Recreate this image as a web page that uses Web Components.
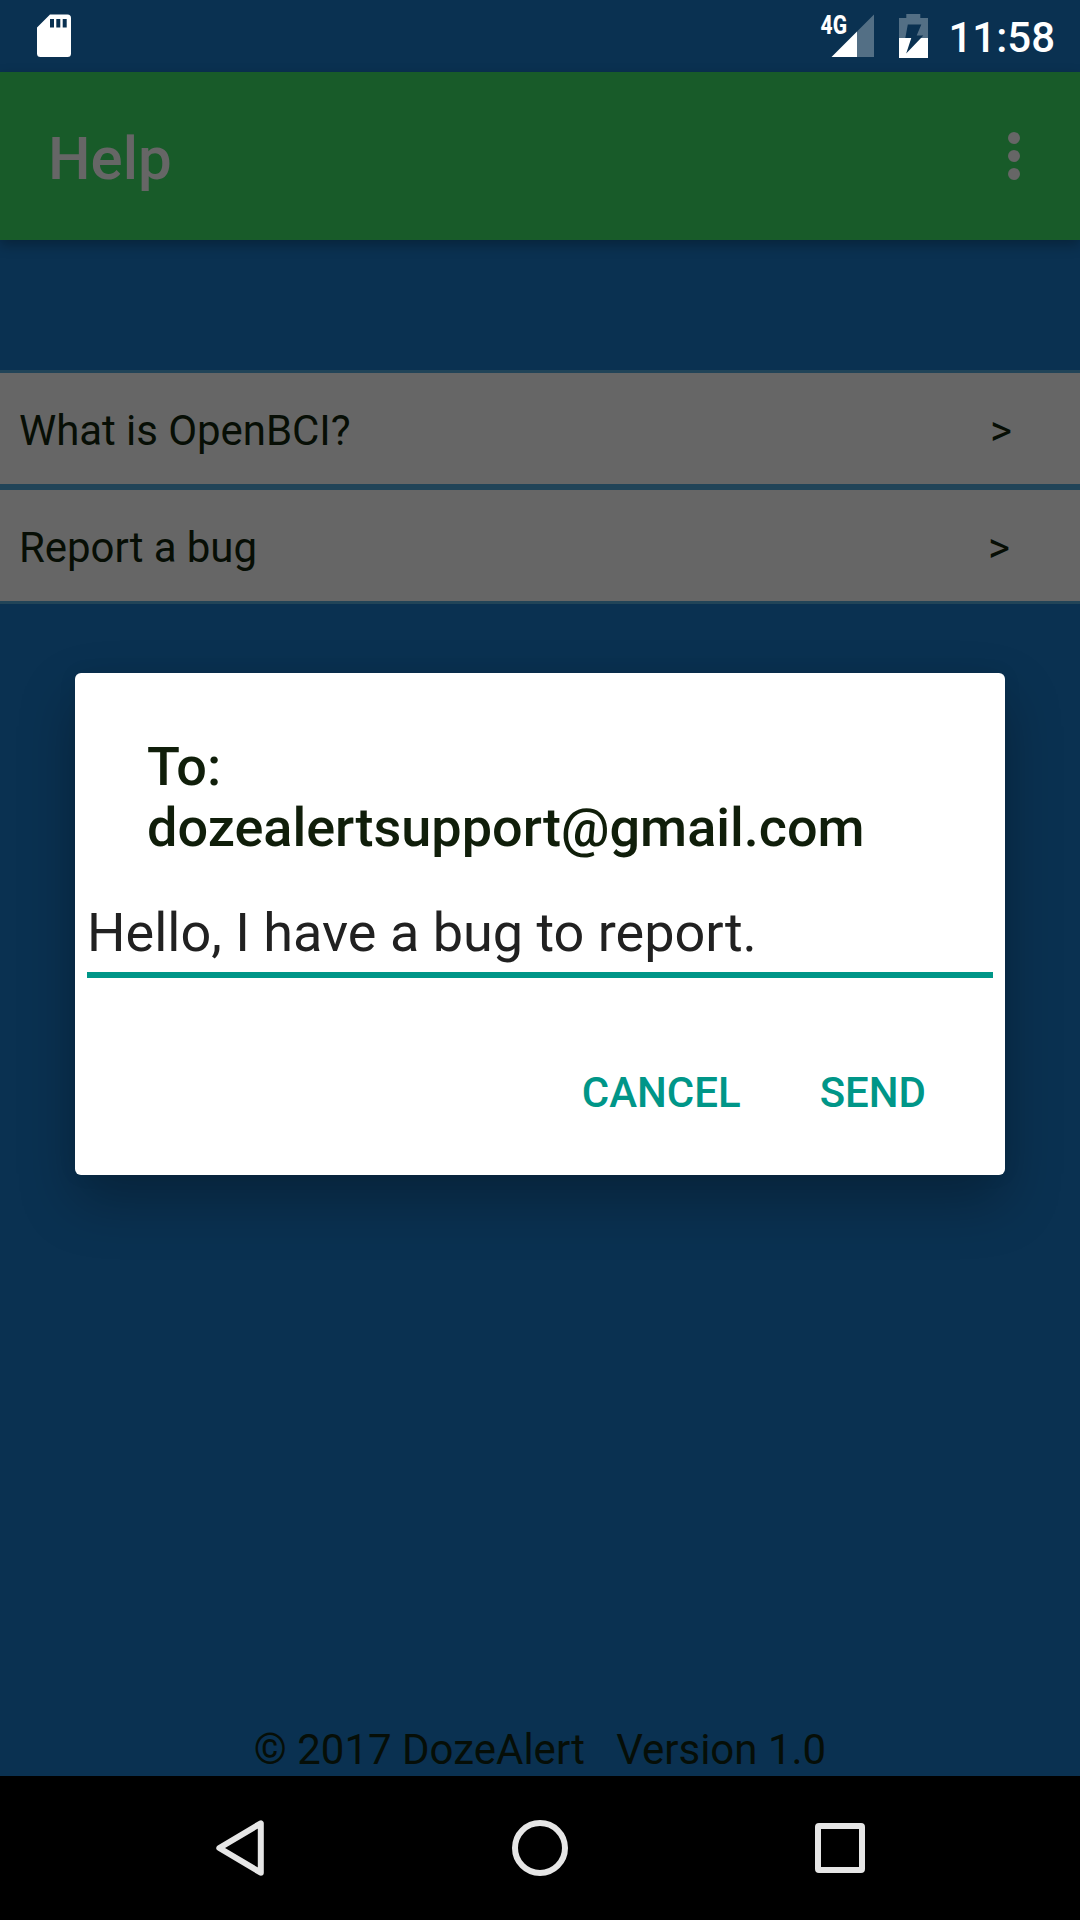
<!DOCTYPE html>
<html lang="en">
<head>
<meta charset="utf-8">
<title>Help</title>
<style>
html,body{margin:0;padding:0}
body{width:1080px;height:1920px;overflow:hidden;font-family:Roboto,sans-serif;background:#0a3151}
</style>
</head>
<body>
<help-screen></help-screen>
<script>
function define(name, html) {
  const t = document.createElement('template');
  t.innerHTML = html;
  customElements.define(name, class extends HTMLElement {
    constructor() {
      super();
      this.attachShadow({ mode: 'open' }).appendChild(t.content.cloneNode(true));
    }
  });
}

define('status-bar', `
<style>
:host{display:flex;height:72px;box-sizing:border-box;padding:0 25px 0 36px;justify-content:space-between;color:#fff}
svg{display:block}
.right{display:flex}
.battery{margin-left:22px}
.time{font-size:42px;font-weight:500;line-height:72px;margin-left:18px;padding-top:2px}
</style>
<svg width="36" height="72" viewBox="36 0 36 72">
  <path fill="#fff" fill-rule="evenodd" d="M50 14.5H67.5Q71 14.5 71 18V53.500Q71 57 67.500 57H40.500Q37 57 37 53.500V27.500ZM50 19V27.500H54V19ZM56.300 19V27.500H60.300V19ZM62.700 19V27.500H66.700V19Z"/>
</svg>
<div class="right">
  <svg width="56" height="72" viewBox="820 0 56 72">
    <path fill="#fff" fill-opacity=".3" d="M874 14.500V57H857V31.500Z"/>
    <path fill="#fff" d="M857 31.500V57H831.500Z"/>
    <text x="820.500" y="33.500" font-size="26" font-weight="800" fill="#fff" textLength="26.500" lengthAdjust="spacingAndGlyphs">4G</text>
  </svg>
  <svg class="battery" width="32" height="72" viewBox="898 0 32 72">
    <path fill="#fff" fill-opacity=".3" d="M906.300 14H920.300V18H928V38H921L923.300 35.500H916.700L921.300 24.500H907.800L905.300 38H899V18H906.300Z"/>
    <path fill="#fff" d="M899 38H911.300L906.200 53.500L921 38H928V58H899Z"/>
  </svg>
  <div class="time">11:58</div>
</div>`);

define('app-bar', `
<style>
:host{display:flex;height:168px;box-sizing:border-box;background:#185b29;color:#666;padding:0 60px 0 48px;justify-content:space-between;align-items:center;box-shadow:0 5px 12px rgba(0,0,0,.28)}
.title{font-size:60px;font-weight:500;line-height:70px;padding-top:6px}
.dots{display:flex;flex-direction:column;gap:6px}
i{width:12px;height:12px;border-radius:50%;background:#666}
</style>
<div class="title"><slot></slot></div>
<div class="dots"><i></i><i></i><i></i></div>`);

define('list-row', `
<style>
:host{display:flex;height:117px;box-sizing:border-box;border:solid #214458;border-width:3px 0;background:#666;color:#070e05;font-size:42px;line-height:49px;padding:0 68px 0 19px;justify-content:space-between;align-items:center}
div{padding-top:4px}
.label{letter-spacing:-.06px}
</style>
<div class="label"><slot></slot></div><div><slot name="end"></slot></div>`);

define('email-dialog', `
<style>
:host{display:flex;flex-direction:column;box-sizing:border-box;width:930px;height:502px;background:#fff;border-radius:6px;box-shadow:0 26px 56px rgba(0,0,0,.27),0 0 20px rgba(0,0,0,.06)}
h1{margin:0;padding:63px 72px 0;font-size:54px;font-weight:500;line-height:61px;color:#101e0a}
.field{margin:37px 12px 0;height:77px;box-sizing:content-box;border-bottom:6px solid #009688;color:#212121;font-size:54px;line-height:75px;white-space:nowrap}
.actions{display:flex;justify-content:flex-end;gap:79px;padding:90px 79px 0 0;font-size:42px;font-weight:500;line-height:50px;color:#009688}
</style>
<h1><slot name="to"></slot></h1>
<div class="field"><slot name="message"></slot></div>
<div class="actions"><slot name="actions"></slot></div>`);

define('nav-bar', `
<style>
:host{display:flex;height:144px;background:#000;justify-content:center;gap:156px;align-items:center}
svg{display:block}
</style>
<svg width="144" height="144" viewBox="168 1776 144 144"><path d="M260.800 1823.300V1872.700L219.300 1848Z" fill="none" stroke="#e6e6e6" stroke-width="6" stroke-linejoin="round"/></svg>
<svg width="144" height="144" viewBox="468 1776 144 144"><circle cx="540" cy="1848" r="25" fill="none" stroke="#e6e6e6" stroke-width="6"/></svg>
<svg width="144" height="144" viewBox="768 1776 144 144"><rect x="818" y="1826" width="44" height="44" rx="1" fill="none" stroke="#e6e6e6" stroke-width="6"/></svg>`);

define('help-screen', `
<style>
:host{display:flex;flex-direction:column;width:1080px;height:1920px;position:relative}
.list{margin-top:130px}
footer{margin-top:auto;text-align:center;font-size:42px;line-height:49px;color:#060e07;white-space:pre;padding-bottom:2px}
email-dialog{position:absolute;left:75px;top:673px}
</style>
<status-bar></status-bar>
<app-bar>Help</app-bar>
<div class="list">
  <list-row>What is OpenBCI?<span slot="end">&gt;</span></list-row>
  <list-row>Report a bug<span slot="end" style="margin-right:2px">&gt;</span></list-row>
</div>
<footer>© 2017 DozeAlert   Version 1.0</footer>
<nav-bar></nav-bar>
<email-dialog>
  <span slot="to">To:<br>dozealertsupport@gmail.com</span>
  <span slot="message">Hello, I have a bug to report.</span>
  <span slot="actions">CANCEL</span>
  <span slot="actions">SEND</span>
</email-dialog>`);
</script>
</body>
</html>
